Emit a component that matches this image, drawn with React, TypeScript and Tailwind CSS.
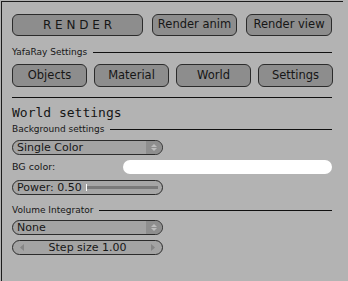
import React from 'react';

const sans = { fontFamily: '"DejaVu Sans", Verdana, sans-serif' };

const Btn = ({ label, className = '' }: { label: string; className?: string }) => (
  <div
    className={`flex items-center justify-center rounded-[6px] border border-[#2b2b2b] bg-[#8d8d8d] text-[11.5px] text-[#161616] ${className}`}
  >
    {label}
  </div>
);

const Header = ({ label }: { label: string }) => (
  <div className="flex h-[10px] items-center text-[9px] leading-none text-[#161616]">
    <span>{label}</span>
    <div className="ml-[6px] mr-[1px] h-px flex-1 bg-[#111]" />
  </div>
);

const Updown = () => (
  <div className="flex h-full w-[16px] items-center justify-center rounded-r-full bg-[#8e8e8e]">
    <svg width="8" height="9" viewBox="0 0 8 9">
      <path d="M1 4 L4 1 L7 4 Z" fill="#bdbdbd" />
      <path d="M1 5 L4 8 L7 5 Z" fill="#bdbdbd" />
    </svg>
  </div>
);

const Menu = ({ label }: { label: string }) => (
  <div className="flex h-[15px] w-[151px] items-center overflow-hidden rounded-full border border-[#2b2b2b] bg-[#a3a3a3] text-[11px] text-[#161616]">
    <span className="flex-1 pl-[4px] leading-none">{label}</span>
    <Updown />
  </div>
);

const App = () => {
  return (
    <div className="h-[281px] w-[348px] overflow-hidden bg-[#b3b3b3]" style={sans}>
      <div className="ml-[1px] mt-[1px] h-[280px] w-[342px] border-l border-t border-[#1c1c1c] pl-[10px] pt-[12px]">
        <div className="w-[321px]">
          <div className="flex h-[22px] gap-[9px]">
            <Btn label="R E N D E R" className="w-[131px] text-[12px]" />
            <Btn label="Render anim" className="w-[85px]" />
            <Btn label="Render view" className="w-[86px]" />
          </div>

          <div className="mt-[11px]">
            <Header label="YafaRay Settings" />
          </div>

          <div className="mt-[7px] flex h-[23px] gap-[7px]">
            <Btn label="Objects" className="flex-1" />
            <Btn label="Material" className="flex-1" />
            <Btn label="World" className="flex-1" />
            <Btn label="Settings" className="flex-1" />
          </div>

          <div className="mr-[1px] mt-[10px] h-px bg-[#111]" />

          <div
            className="mt-[7px] h-[15px] text-[13px] leading-[15px] text-[#161616]"
            style={{ fontFamily: '"DejaVu Sans Mono", monospace' }}
          >
            World settings
          </div>

          <div className="mt-[4px]">
            <Header label="Background settings" />
          </div>

          <div className="mt-[6px]">
            <Menu label="Single Color" />
          </div>

          <div className="mt-[5px] flex h-[14px] items-center">
            <span className="w-[111px] text-[9.5px] leading-none text-[#161616]">BG color:</span>
            <div className="mr-[1px] h-[14px] flex-1 rounded-[7px] bg-white" />
          </div>

          <div className="mt-[6px] flex h-[15px] w-[151px] items-center rounded-full border border-[#2b2b2b] bg-[#a6a6a6] text-[11px] text-[#161616]">
            <span className="pl-[4px] leading-none">Power: 0.50</span>
            <div className="ml-[4px] h-[7px] w-px bg-white" />
            <div className="mr-[4px] h-[3px] flex-1 bg-[#7a7a7a]" />
          </div>

          <div className="mt-[10px]">
            <Header label="Volume Integrator" />
          </div>

          <div className="mt-[5px]">
            <Menu label="None" />
          </div>

          <div className="mt-[5px] flex h-[15px] w-[151px] items-center rounded-full border border-[#2b2b2b] bg-[#a3a3a3] px-[7px] text-[11px] text-[#161616]">
            <svg width="5" height="7" viewBox="0 0 5 7">
              <path d="M4 0 L0 3.5 L4 7 Z" fill="#858585" />
            </svg>
            <span className="flex-1 text-center leading-none">Step size 1.00</span>
            <svg width="5" height="7" viewBox="0 0 5 7">
              <path d="M1 0 L5 3.5 L1 7 Z" fill="#858585" />
            </svg>
          </div>
        </div>
      </div>
    </div>
  );
};

export default App;
